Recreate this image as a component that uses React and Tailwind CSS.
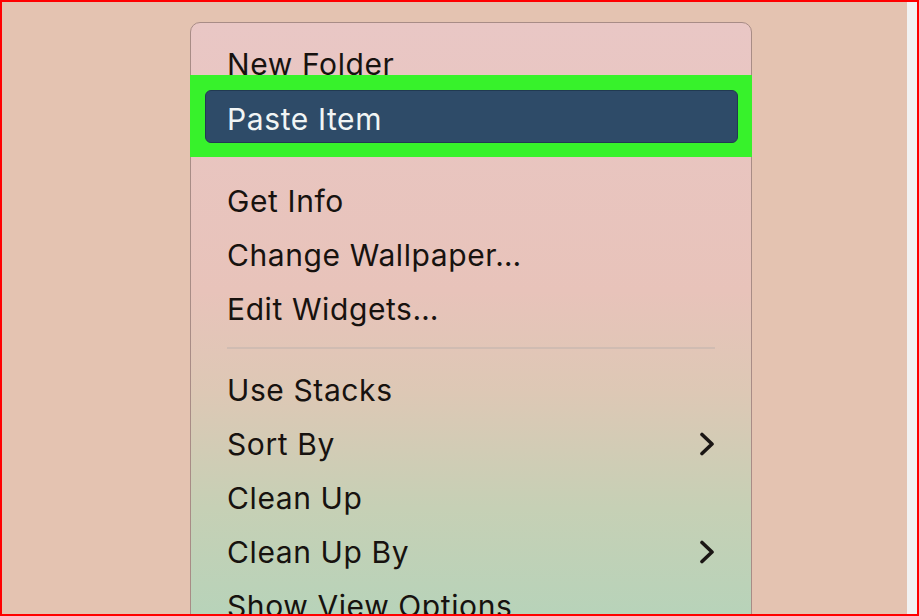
const Chevron = () => (
  <svg width="16" height="24" viewBox="0 0 16 24" className="shrink-0">
    <polyline
      points="3,2.5 13,12 3,21.5"
      fill="none"
      stroke="#1a1614"
      strokeWidth="3.6"
      strokeLinecap="round"
      strokeLinejoin="round"
    />
  </svg>
);

const Item = ({ label, sub }) => (
  <div className="h-[54px] flex items-center justify-between pl-[36px] pr-[36px] pt-[2px]">
    <span>{label}</span>
    {sub && <Chevron />}
  </div>
);

export default function App() {
  return (
    <div className="w-[919px] h-[616px] border-2 border-[#ff0000] flex overflow-hidden">
      <div className="flex-1 bg-[#e4c3b1] overflow-hidden pl-[188px] pt-[20px]">
        <div
          className="w-[562px] h-[640px] rounded-t-[10px] border border-[#a88c86] bg-[linear-gradient(to_bottom,#e9c7c5_0%,#e8c3ba_42%,#ddc8b5_58%,#c6d0b5_76%,#b1d4bb_100%)] text-[30px] text-[#17120f] tracking-[0.6px]"
          style={{ fontFamily: 'Inter, "Noto Sans", sans-serif' }}
        >
          <div className="h-[52px] pl-[36px] pt-[23px] leading-[36px]">New Folder</div>
          <div className="-mx-px h-[82px] bg-[#37f22b] p-[15px] pr-[14px]">
            <div className="h-[53px] rounded-[6px] bg-[#2e4b68] border border-[#213a52] flex items-center pl-[21px] pt-[4px] text-[#f1f5f5] leading-[36px]">
              Paste Item
            </div>
          </div>
          <div className="pt-[16px] leading-[36px]">
            <Item label="Get Info" />
            <Item label="Change Wallpaper…" />
            <Item label="Edit Widgets…" />
            <div className="mx-[36px] mt-[12px] mb-[13px] h-[2px] bg-[#d0bcb2]" />
            <Item label="Use Stacks" />
            <Item label="Sort By" sub />
            <Item label="Clean Up" />
            <Item label="Clean Up By" sub />
            <Item label="Show View Options" />
          </div>
        </div>
      </div>
      <div className="w-[10px] bg-[#f2f2f2]" />
    </div>
  );
}
